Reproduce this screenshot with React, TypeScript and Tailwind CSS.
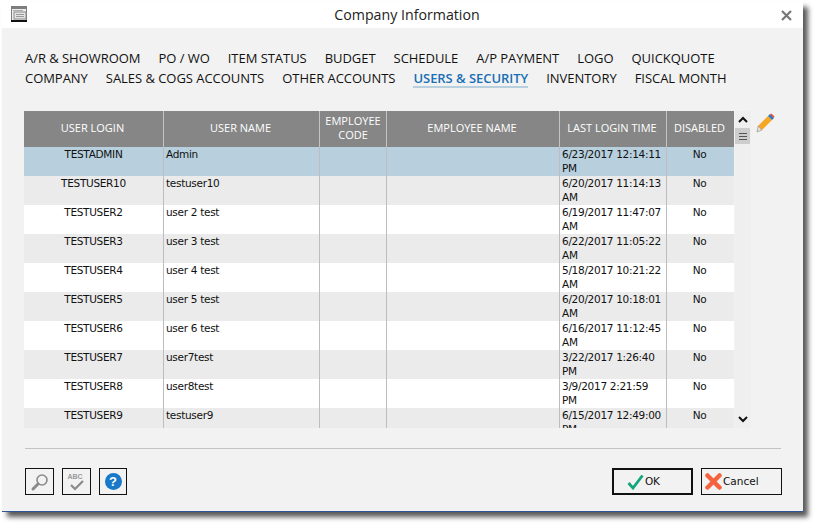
import React from "react";

const rows = [
  ["TESTADMIN", "Admin", "6/23/2017 12:14:11 PM"],
  ["TESTUSER10", "testuser10", "6/20/2017 11:14:13 AM"],
  ["TESTUSER2", "user 2 test", "6/19/2017 11:47:07 AM"],
  ["TESTUSER3", "user 3 test", "6/22/2017 11:05:22 AM"],
  ["TESTUSER4", "user 4 test", "5/18/2017 10:21:22 AM"],
  ["TESTUSER5", "user 5 test", "6/20/2017 10:18:01 AM"],
  ["TESTUSER6", "user 6 test", "6/16/2017 11:12:45 AM"],
  ["TESTUSER7", "user7test", "3/22/2017 1:26:40 PM"],
  ["TESTUSER8", "user8test", "3/9/2017 2:21:59 PM"],
  ["TESTUSER9", "testuser9", "6/15/2017 12:49:00 PM"],
];
const tabs1 = ["A/R & SHOWROOM", "PO / WO", "ITEM STATUS", "BUDGET", "SCHEDULE", "A/P PAYMENT", "LOGO", "QUICKQUOTE"];
const tabs2 = ["COMPANY", "SALES & COGS ACCOUNTS", "OTHER ACCOUNTS", "USERS & SECURITY", "INVENTORY", "FISCAL MONTH"];
const cols = "grid grid-cols-[140px_156px_67px_173px_107px_67px]";
const heads = ["USER LOGIN", "USER NAME", "EMPLOYEE CODE", "EMPLOYEE NAME", "LAST LOGIN TIME", "DISABLED"];
const ui = "font-['Open_Sans','Noto_Sans',sans-serif]";
const cell = "font-['DejaVu_Sans','Liberation_Sans',sans-serif] text-[10.5px] leading-[14px] tracking-[-0.3px]";

function Tab({ label }: { label: string }) {
  const active = label === "USERS & SECURITY";
  return (
    <span className={active ? "h-[20px] border-b-2 border-[#b8d0de] font-semibold text-[#1a6fb5] whitespace-nowrap" : "h-[20px] text-[#111] whitespace-nowrap"}>
      {label}
    </span>
  );
}

export default function App() {
  return (
    <div className="w-[817px] h-[526px] bg-white pl-[2px] pt-[2px] overflow-hidden">
      <div className={`w-[801px] h-[510px] bg-[#f2f2f2] border-b border-[#2f5597] shadow-[5px_5px_5px_rgba(0,0,0,0.65)] flex flex-col ${ui}`}>
        <div className="h-[26px] bg-white flex items-center pl-[9px] pr-[11px] shrink-0">
          <svg width="16" height="16" viewBox="0 0 16 16" className="shrink-0 -mt-[2px]">
            <rect x="0" y="0" width="16" height="16" fill="#7d7d7d" />
            <rect x="0" y="14" width="16" height="2" fill="#111" />
            <rect x="1" y="3" width="14" height="11" fill="#eeeeee" />
            <rect x="2" y="4" width="10" height="1" fill="#aaa" />
            <rect x="3" y="6" width="12" height="7" fill="#e4e4e4" stroke="#8a8a8a" strokeWidth="1" />
            <rect x="5" y="8" width="8" height="1" fill="#999" />
            <rect x="5" y="10" width="8" height="1" fill="#999" />
          </svg>
          <div className="flex-1 text-center text-[14.2px] text-[#222] pl-[6px]">Company Information</div>
          <svg width="11" height="11" viewBox="0 0 11 11" className="shrink-0">
            <path d="M1 1 L10 10 M10 1 L1 10" stroke="#777" strokeWidth="2.2" />
          </svg>
        </div>
        <div className="pl-[23px] pt-[20px] text-[13px] leading-[20px] tracking-[-0.04px]">
          <div className="flex gap-[18px]">{tabs1.map((t) => <Tab key={t} label={t} />)}</div>
          <div className="flex gap-[18px]">{tabs2.map((t) => <Tab key={t} label={t} />)}</div>
        </div>
        <div className="flex pl-[22px] pt-[23px]">
          <div className="w-[710px] h-[317px] overflow-hidden">
            <div className={`${cols} h-[36px] bg-[#868686] text-white text-center text-[11px] leading-[14px]`}>
              {heads.map((h, i) => (
                <div key={h} className={`flex items-center justify-center pb-[2px] ${i === 2 ? "px-2" : "pr-[2px]"} ${i < 5 ? "border-r border-[#c4c4c4]" : ""}`}>
                  {h}
                </div>
              ))}
            </div>
            {rows.map((r, i) => (
              <div key={r[0]} className={`${cols} h-[29px] overflow-hidden ${cell} text-[#111] ${i === 0 ? "bg-[#b8d0de]" : i % 2 ? "bg-[#ebebeb]" : "bg-white"}`}>
                <div className="text-center border-r border-[#bdbdbd]">{r[0]}</div>
                <div className="pl-[2px] border-r border-[#bdbdbd]">{r[1]}</div>
                <div className="border-r border-[#bdbdbd]" />
                <div className="border-r border-[#bdbdbd]" />
                <div className="pl-[2px] pr-[2px] border-r border-[#bdbdbd]">{r[2]}</div>
                <div className="text-center pr-[2px]">No</div>
              </div>
            ))}
          </div>
          <div className="w-[16px] h-[317px] ml-px bg-[#efefef] flex flex-col items-center justify-between">
            <div className="flex flex-col w-full">
              <svg width="16" height="17" viewBox="0 0 16 17"><path d="M4 11 L8 7 L12 11" fill="none" stroke="#111" strokeWidth="2" /></svg>
              <div className="h-[16px] w-[15px] bg-[#cdcdcd] flex flex-col gap-[2px] items-center justify-center">
                <div className="w-[8px] h-px bg-[#555]" />
                <div className="w-[8px] h-px bg-[#555]" />
                <div className="w-[8px] h-px bg-[#555]" />
              </div>
            </div>
            <svg width="16" height="14" viewBox="0 0 16 14"><path d="M4 3 L8 7 L12 3" fill="none" stroke="#111" strokeWidth="2" /></svg>
          </div>
          <svg width="20" height="20" viewBox="0 0 20 20" className="ml-[4px] mt-[2px] shrink-0">
            <path d="M3 13 L13 3 L17 7 L7 17 Z" fill="#f5a623" />
            <path d="M13 3 L15 1 L19 5 L17 7 Z" fill="#2a78c8" />
            <path d="M15 1.5 L16.5 0.5 L19.5 3.5 L18.5 5 Z" fill="#e2543c" />
            <path d="M3 13 L7 17 L2 19 Z" fill="#e8e0d0" stroke="#888" strokeWidth="0.6" />
          </svg>
        </div>
        <div className="ml-[23px] w-[756px] h-px bg-[#c4c4c4] mt-[20px]" />
        <div className="flex ml-[23px] w-[757px] mt-[19px] items-stretch h-[27px]">
          <button className="w-[29px] border border-[#111] flex items-center justify-center mr-[8px]">
            <svg width="20" height="20" viewBox="0 0 20 20">
              <circle cx="12" cy="8" r="5" fill="none" stroke="#8a8a8a" strokeWidth="1.6" />
              <path d="M8 12 L3 17" stroke="#8a8a8a" strokeWidth="3" strokeLinecap="round" />
            </svg>
          </button>
          <button className="w-[29px] border border-[#111] flex flex-col items-center justify-center mr-[8px]">
            <span className="text-[7px] leading-[7px] font-bold text-[#999] font-['Liberation_Sans',sans-serif] -ml-[3px]">ABC</span>
            <svg width="16" height="11" viewBox="0 0 16 11"><path d="M2 5 L6 9 L14 1" fill="none" stroke="#8a8a8a" strokeWidth="2.2" /></svg>
          </button>
          <button className="w-[28px] border border-[#111] flex items-center justify-center">
            <span className="w-[17px] h-[17px] rounded-full bg-[#1a78c8] text-white text-[13px] leading-[17px] font-bold text-center font-['Liberation_Sans',sans-serif]">?</span>
          </button>
          <div className="flex-1" />
          <button className="w-[81px] border-2 border-[#111] flex items-center pl-[13px] gap-px text-[10.5px] tracking-[-0.2px] font-['DejaVu_Sans',sans-serif] text-[#111] mr-[8px]">
            <svg width="17" height="16" viewBox="0 0 17 16"><path d="M1.5 9 L6 14 L15.5 1.5" fill="none" stroke="#12a67c" strokeWidth="2.8" /></svg>
            OK
          </button>
          <button className="w-[81px] border border-[#111] flex items-center pl-[3px] gap-px text-[10.5px] font-['DejaVu_Sans',sans-serif] text-[#111]">
            <svg width="17" height="17" viewBox="0 0 17 17"><path d="M2.5 2.5 L14.5 14.5 M14.5 2.5 L2.5 14.5" stroke="#f4623e" strokeWidth="4.5" strokeLinecap="round" /></svg>
            Cancel
          </button>
        </div>
      </div>
    </div>
  );
}
